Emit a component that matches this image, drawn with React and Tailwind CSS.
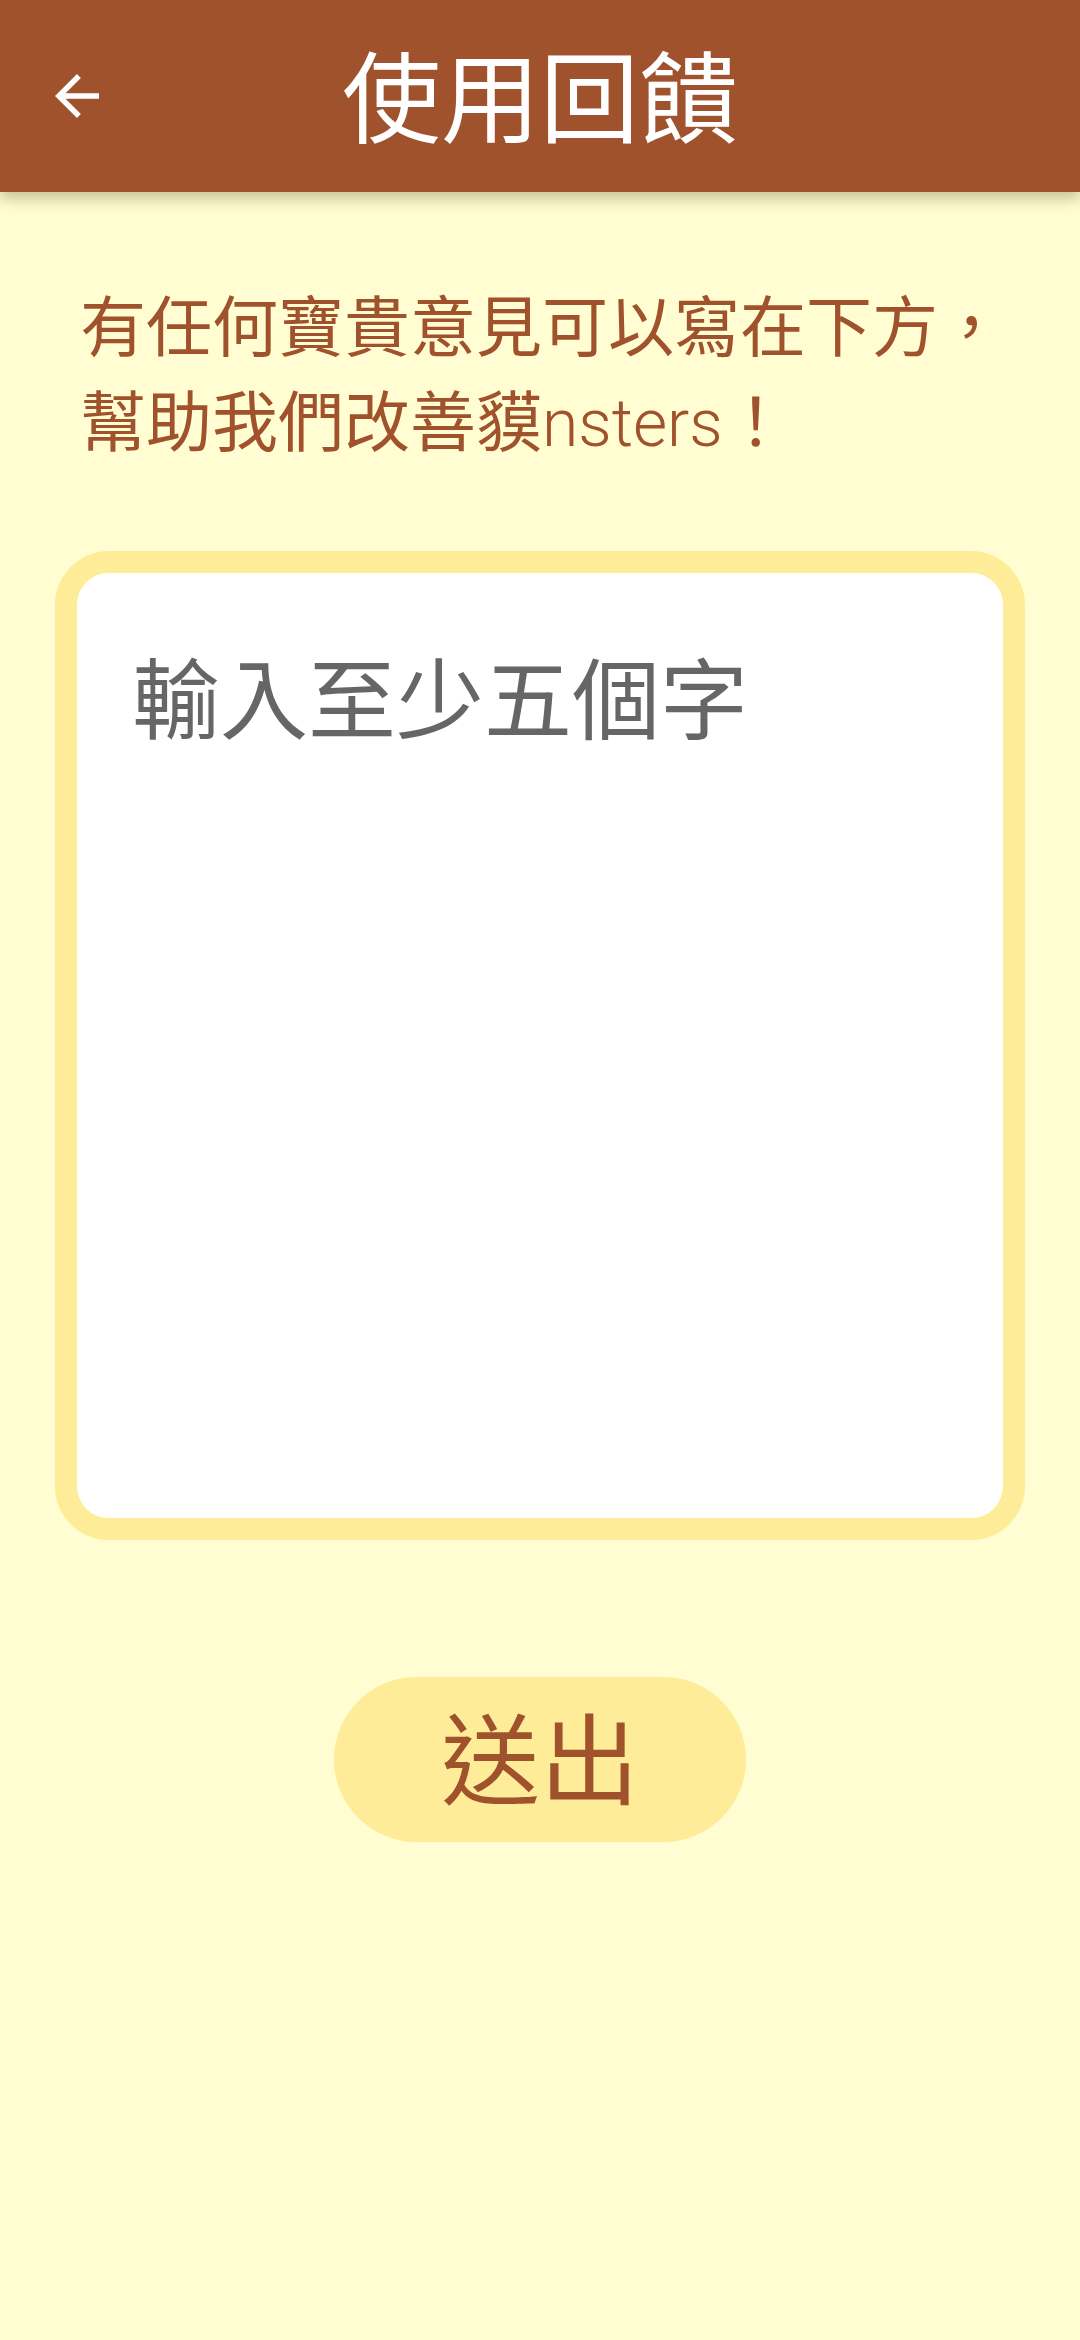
import React, { useState } from 'react';

const font = { fontFamily: 'Roboto, "Noto Sans CJK TC", sans-serif' };

const BackArrow = () => (
  <svg viewBox="0 0 24 24" className="h-[66px] w-[66px]" fill="#ffffff">
    <path d="M20 11H7.83l5.59-5.59L12 4l-8 8 8 8 1.41-1.41L7.83 13H20v-2z" />
  </svg>
);

const Feedback = () => {
  const [text, setText] = useState('');

  return (
    <div className="min-h-[2340px] w-full bg-[#FFFDD1]" style={font}>
      {/* Header */}
      <div className="grid h-[192px] grid-cols-[1fr_auto_1fr] items-center bg-[#A0522D] shadow-[0_6px_14px_rgba(60,60,0,0.3)]">
        <div className="pl-[44px]">
          <BackArrow />
        </div>
        <h1 className="pt-[10px] text-[99px] leading-none text-white">使用回饋</h1>
        <div />
      </div>

      {/* Intro text */}
      <p className="mt-[89px] whitespace-nowrap pl-[80px] pr-[20px] text-[66px] leading-[95px] text-[#A0522D]">
        有任何寶貴意見可以寫在下方，
        <br />
        幫助我們改善貘<span className="font-light">nsters</span>！
      </p>

      {/* Input box */}
      <div className="mx-[55px] mt-[80px] h-[989px] rounded-[54px] border-[22px] border-[#FFEC99] bg-white">
        <textarea
          value={text}
          onChange={(e) => setText(e.target.value)}
          placeholder="輸入至少五個字"
          className="h-full w-full resize-none rounded-[32px] bg-transparent px-[55px] pt-[76px] text-[88px] leading-[1.2] text-[#333] outline-none placeholder:text-[#666666]"
          style={font}
        />
      </div>

      {/* Submit */}
      <div className="mt-[137px] flex justify-center">
        <button className="h-[165px] w-[412px] rounded-full bg-[#FFEC99] pt-[8px] text-[99px] leading-none text-[#A0522D]">
          送出
        </button>
      </div>
    </div>
  );
};

export default function App() {
  return <Feedback />;
}
